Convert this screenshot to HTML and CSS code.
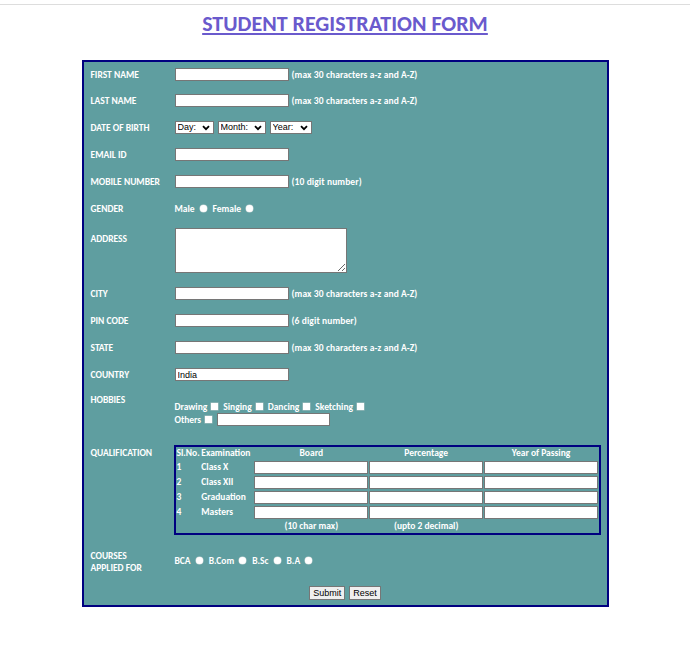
FILE: index.html
```html
<!DOCTYPE html>
<html>
<head>
<meta charset="utf-8">
<title>Student Registration Form</title>
<link rel="stylesheet" href="styles.css">
</head>
<body>
<div class="topline"></div>
<h1 class="title">STUDENT REGISTRATION FORM</h1>
<form class="form">
  <div class="row r-first">
    <span class="lbl">FIRST NAME</span>
    <div class="fld"><input class="txt" type="text"><span class="hint">(max 30 characters a-z and A-Z)</span></div>
  </div>
  <div class="row">
    <span class="lbl">LAST NAME</span>
    <div class="fld"><input class="txt" type="text"><span class="hint">(max 30 characters a-z and A-Z)</span></div>
  </div>
  <div class="row">
    <span class="lbl">DATE OF BIRTH</span>
    <div class="fld sels">
      <select class="sel sel-day"><option>Day:</option></select>
      <select class="sel sel-month"><option>Month:</option></select>
      <select class="sel sel-year"><option>Year:</option></select>
    </div>
  </div>
  <div class="row">
    <span class="lbl">EMAIL ID</span>
    <div class="fld"><input class="txt" type="text"></div>
  </div>
  <div class="row">
    <span class="lbl">MOBILE NUMBER</span>
    <div class="fld"><input class="txt" type="text"><span class="hint">(10 digit number)</span></div>
  </div>
  <div class="row">
    <span class="lbl">GENDER</span>
    <div class="fld opts">
      <span class="opt">Male</span><input class="radio" type="radio" name="g">
      <span class="opt">Female</span><input class="radio" type="radio" name="g">
    </div>
  </div>
  <div class="row r-address">
    <span class="lbl lbl-top">ADDRESS</span>
    <div class="fld"><textarea class="area"></textarea></div>
  </div>
  <div class="row">
    <span class="lbl">CITY</span>
    <div class="fld"><input class="txt" type="text"><span class="hint">(max 30 characters a-z and A-Z)</span></div>
  </div>
  <div class="row">
    <span class="lbl">PIN CODE</span>
    <div class="fld"><input class="txt" type="text"><span class="hint">(6 digit number)</span></div>
  </div>
  <div class="row">
    <span class="lbl">STATE</span>
    <div class="fld"><input class="txt" type="text"><span class="hint">(max 30 characters a-z and A-Z)</span></div>
  </div>
  <div class="row">
    <span class="lbl">COUNTRY</span>
    <div class="fld"><input class="txt" type="text" value="India"></div>
  </div>
  <div class="row r-hobbies">
    <span class="lbl lbl-hob">HOBBIES</span>
    <div class="fld hob">
      <div class="hob-line">
        <span class="opt">Drawing</span><input class="chk" type="checkbox">
        <span class="opt">Singing</span><input class="chk" type="checkbox">
        <span class="opt">Dancing</span><input class="chk" type="checkbox">
        <span class="opt">Sketching</span><input class="chk" type="checkbox">
      </div>
      <div class="hob-line">
        <span class="opt">Others</span><input class="chk" type="checkbox"><input class="txt txt-other" type="text">
      </div>
    </div>
  </div>
  <div class="row r-qual">
    <span class="lbl lbl-qual">QUALIFICATION</span>
    <div class="fld">
      <table class="qtable">
        <thead>
          <tr><th class="c-sl">Sl.No.</th><th class="c-ex">Examination</th><th class="c-in">Board</th><th class="c-in">Percentage</th><th class="c-in">Year of Passing</th></tr>
        </thead>
        <tbody>
          <tr><td>1</td><td class="ex">Class X</td><td><input class="qin" type="text"></td><td><input class="qin" type="text"></td><td><input class="qin" type="text"></td></tr>
          <tr><td>2</td><td class="ex">Class XII</td><td><input class="qin" type="text"></td><td><input class="qin" type="text"></td><td><input class="qin" type="text"></td></tr>
          <tr><td>3</td><td class="ex">Graduation</td><td><input class="qin" type="text"></td><td><input class="qin" type="text"></td><td><input class="qin" type="text"></td></tr>
          <tr><td>4</td><td class="ex">Masters</td><td><input class="qin" type="text"></td><td><input class="qin" type="text"></td><td><input class="qin" type="text"></td></tr>
          <tr class="qfoot"><td></td><td></td><td>(10 char max)</td><td>(upto 2 decimal)</td><td></td></tr>
        </tbody>
      </table>
    </div>
  </div>
  <div class="row r-courses">
    <span class="lbl lbl-courses">COURSES<br>APPLIED FOR</span>
    <div class="fld opts">
      <span class="opt">BCA</span><input class="radio" type="radio" name="c">
      <span class="opt">B.Com</span><input class="radio" type="radio" name="c">
      <span class="opt">B.Sc</span><input class="radio" type="radio" name="c">
      <span class="opt">B.A</span><input class="radio" type="radio" name="c">
    </div>
  </div>
  <div class="buttons">
    <button class="btn" type="button">Submit</button>
    <button class="btn" type="button">Reset</button>
  </div>
</form>
</body>
</html>
```

FILE: styles.css
```css
html, body {
  margin: 0;
  padding: 0;
  background: #ffffff;
}
body {
  font-family: Carlito, Lato, "Open Sans", sans-serif;
}
.topline {
  height: 4px;
  border-bottom: 1px solid #dddddd;
}
.title {
  margin: 6px 0 0 0;
  height: 49px;
  text-align: center;
  font-size: 22px;
  font-weight: bold;
  line-height: 26px;
  color: #6a5acd;
  text-decoration: underline;
  text-decoration-thickness: 2px;
  text-underline-offset: 2px;
}
.form {
  box-sizing: border-box;
  width: 527px;
  margin: 0 auto;
  border: 2px solid #000080;
  background: #5f9ea0;
  padding: 0 0 5px 7px;
  color: #ffffff;
  font-weight: bold;
  font-size: 9.5px;
}
.row {
  display: flex;
  align-items: center;
  height: 27px;
}
.r-first {
  height: 25px;
}
.lbl {
  flex: 0 0 84px;
  width: 84px;
  line-height: 11px;
  padding-top: 1px;
}
.fld {
  display: flex;
  align-items: center;
  gap: 3px;
}
.txt {
  box-sizing: border-box;
  width: 114px;
  height: 13px;
  margin: 0;
  padding: 0 2px;
  border: 1px solid #767676;
  background: #ffffff;
  font-family: "Liberation Sans", Arial, sans-serif;
  font-size: 9px;
  font-weight: normal;
  color: #000000;
  outline: none;
}
.hint {
  white-space: nowrap;
  letter-spacing: 0.1px;
}
.sels {
  gap: 4px;
}
.sel {
  -webkit-appearance: none;
  appearance: none;
  box-sizing: border-box;
  height: 13px;
  margin: 0;
  padding: 0 13px 0 2px;
  border: 1px solid #767676;
  border-radius: 0;
  background: #ffffff url("data:image/svg+xml,%3Csvg xmlns='http://www.w3.org/2000/svg' width='8' height='6' viewBox='0 0 8 6'%3E%3Cpath d='M1 1.2 L4 4.2 L7 1.2' fill='none' stroke='%23000' stroke-width='1.8'/%3E%3C/svg%3E") no-repeat right 3px center;
  font-family: "Liberation Sans", Arial, sans-serif;
  font-size: 9px;
  font-weight: normal;
  line-height: 11px;
  color: #000000;
}
.sel-day { width: 39px; }
.sel-month { width: 48px; }
.sel-year { width: 42px; }
.opts {
  gap: 0;
}
.opt {
  white-space: nowrap;
}
.radio {
  -webkit-appearance: none;
  appearance: none;
  width: 7px;
  height: 7px;
  margin: 0 6px 0 5px;
  border: none;
  border-radius: 50%;
  background: #ffffff;
  box-shadow: 0 0 0 0.5px #c8d6d6;
}
.chk {
  -webkit-appearance: none;
  appearance: none;
  width: 7px;
  height: 7px;
  margin: 0 5px 0 4px;
  border: none;
  border-radius: 0;
  background: #ffffff;
  box-shadow: 0 0 0 0.5px #b0c4c4;
}
.r-address {
  height: 58px;
  align-items: flex-start;
}
.r-address .fld {
  padding-top: 6px;
}
.lbl-top {
  padding-top: 12px;
}
.area {
  box-sizing: border-box;
  width: 172px;
  height: 45px;
  margin: 0;
  border: 1px solid #767676;
  background: #ffffff;
  outline: none;
}
.r-hobbies {
  height: 49px;
  align-items: flex-start;
}
.lbl-hob {
  padding-top: 7px;
}
.hob {
  display: block;
  padding-top: 12px;
}
.hob-line {
  display: flex;
  align-items: center;
  height: 13px;
}
.txt-other {
  width: 113px;
  margin-left: 0;
}
.r-qual {
  height: auto;
  align-items: flex-start;
  padding-top: 8px;
}
.r-qual .fld {
  margin-left: -1px;
}
.lbl-qual {
  padding-top: 3px;
}
.qtable {
  border: 2px solid #000080;
  border-spacing: 0;
  width: 427px;
  font-size: 9.5px;
  line-height: 11px;
  color: #ffffff;
}
.qtable th, .qtable td {
  padding: 0;
  height: 15px;
  white-space: nowrap;
}
.qtable th {
  height: 13px;
  text-align: center;
  vertical-align: middle;
}
.qtable th.c-sl, .qtable td:first-child {
  text-align: left;
  padding-left: 1px;
  width: 25px;
}
.qtable th.c-ex {
  text-align: left;
  width: 53px;
}
.qtable td.ex {
  padding-left: 0;
}
.qtable .c-in {
  width: 115px;
}
.qin {
  box-sizing: border-box;
  display: block;
  width: 114px;
  height: 13px;
  margin: 0;
  border: 1px solid #767676;
  background: #ffffff;
  outline: none;
}
.qtable .qfoot td {
  height: 13px;
  text-align: center;
}
.r-courses {
  height: auto;
  padding-top: 12px;
}
.lbl-courses {
  line-height: 12px;
  padding-top: 3px;
}
.buttons {
  display: flex;
  justify-content: center;
  gap: 4px;
  padding-top: 12px;
  margin-left: -7px;
}
.btn {
  box-sizing: border-box;
  height: 14px;
  margin: 0;
  padding: 0 3px;
  border: 1px solid #767676;
  border-radius: 0;
  background: #efefef;
  font-family: "Liberation Sans", Arial, sans-serif;
  font-size: 9px;
  font-weight: normal;
  line-height: 12px;
  color: #000000;
}
```
